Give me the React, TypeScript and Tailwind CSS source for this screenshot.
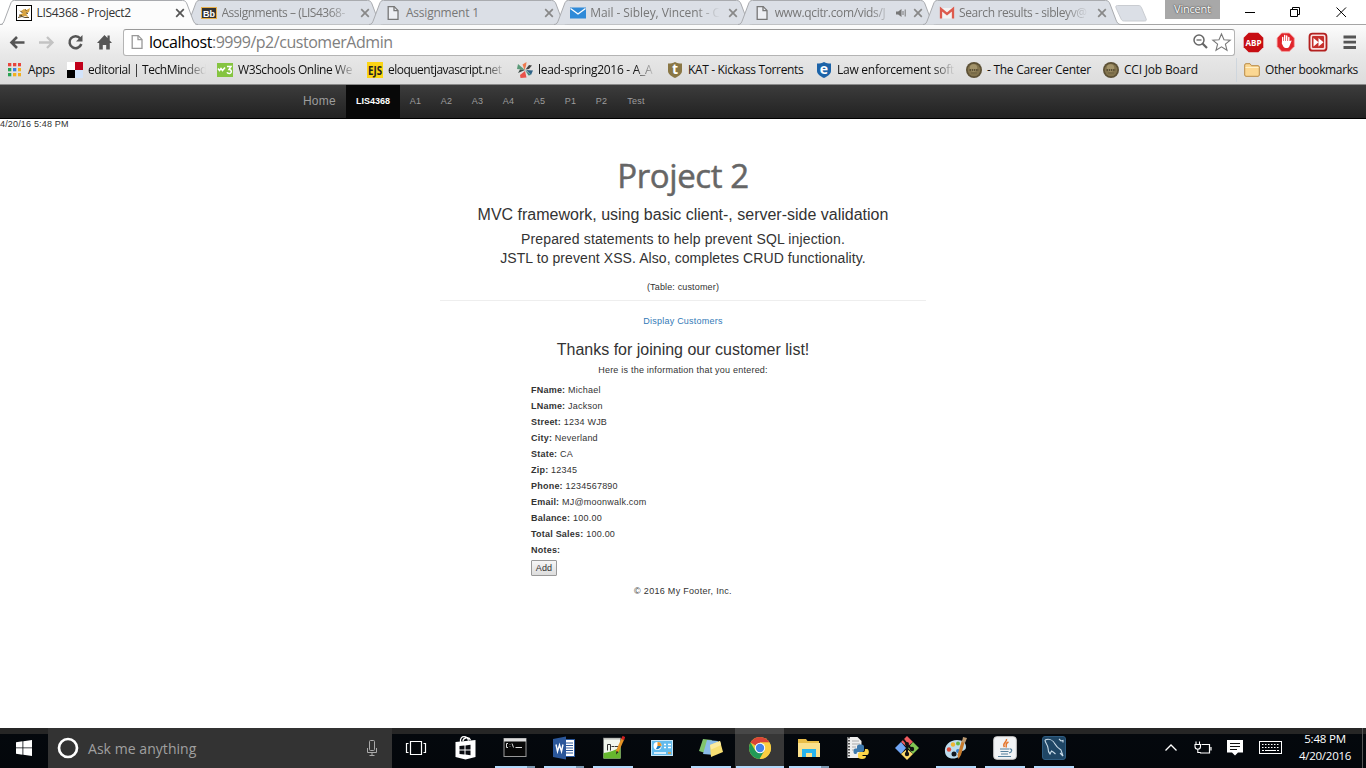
import React from "react";

const segoe = "font-['Open_Sans','Noto_Sans',sans-serif]";

/* ---------- small drawings ---------- */

const PageIcon = ({ tint = "#777" }: { tint?: string }) => (
  <svg width="16" height="16" viewBox="0 0 16 16" fill="#fff" fillOpacity=".5" stroke={tint} strokeWidth="1.3">
    <path d="M3.2 1.6h6l3.8 3.8v9H3.2z" />
    <path d="M9 1.6v4h4" fill="none" />
  </svg>
);

const CatIcon = () => (
  <svg width="16" height="16" viewBox="0 0 16 16">
    <rect x=".5" y=".5" width="15" height="15" fill="#fff" stroke="#000" />
    <path d="M2 4.500l3 1.500 3-2 2.500 1L14 3l-1 4-3 1.500 2.500 3.500-4-1-5.500 1L4 9.500 7 8z" fill="#d9a441" />
    <path d="M2 12.500l4-1 3 1h4M3 10l3 .5M9 4.500l1.500 1M10 8l2 .5M4.500 6.500l2 1" stroke="#5b4a2a" fill="none" />
  </svg>
);

const BbIcon = () => (
  <svg width="16" height="16" viewBox="0 0 16 16">
    <rect x=".5" y="2.500" width="15" height="11" fill="#333" stroke="#e8b04a" />
    <text x="8" y="11.500" textAnchor="middle" fontSize="9" fontWeight="700" fill="#fff" fontFamily="Liberation Sans">Bb</text>
  </svg>
);

const MailIcon = () => (
  <svg width="16" height="16" viewBox="0 0 16 16">
    <rect y="2.500" width="16" height="11" fill="#2f8ad8" />
    <path d="M.5 3.500L8 9l7.500-5.500" stroke="#fff" strokeWidth="1.300" fill="none" />
  </svg>
);

const GmailIcon = () => (
  <svg width="16" height="16" viewBox="0 0 16 16">
    <path d="M2 3h12v10.500H2z" fill="#f3f3f3" />
    <path d="M2 13.500V4l6 5 6-5v9.500" stroke="#dd5b4e" strokeWidth="2.300" fill="none" />
  </svg>
);

const CloseX = ({ tint = "#848484" }: { tint?: string }) => (
  <svg width="10" height="10" viewBox="0 0 10 10" stroke={tint} strokeWidth="1.700">
    <path d="M1.200 1.200l7.600 7.600M8.800 1.200L1.200 8.800" />
  </svg>
);

const Speaker = () => (
  <svg width="11" height="10" viewBox="0 0 11 10" fill="#777">
    <path d="M0 3.500h2.200L5.500 1v8L2.200 6.500H0z" />
    <path d="M7 3v4M9.200 1.500v7" stroke="#777" />
  </svg>
);

/* ---------- tab strip ---------- */

type TabProps = { icon: React.ReactNode; title: string; cls: string; active?: boolean; sound?: boolean };

const Tab = ({ icon, title, cls, active, sound }: TabProps) => (
  <div className={`relative h-[26px] shrink-0 ${active ? "z-10 w-[185px]" : "w-[184.400px]"}`}>
    <svg className="absolute top-0 left-0 overflow-visible" width="200" height="26" viewBox="0 0 200 26">
      <path
        d="M0 24.500C3 24.500 3.500 22.500 4.500 20L10.500 4C11.500 1.500 12 .5 14.500 .5H182.500C185 .5 186 1.500 187 4L193 20C194 22.500 195 24.500 198 24.500"
        fill={active ? "#fcfcfc" : "#dbdfe6"}
        stroke="#a9abaf"
      />
      {active && <path d="M0 25.500h198M3 24.500h192" stroke="#fcfcfc" />}
    </svg>
    <div className="relative flex h-full items-center pl-4">
      <span className="w-[20.500px] shrink-0">{icon}</span>
      <span
        className={`relative shrink-0 whitespace-nowrap text-[12px] leading-[18px] ${cls} ${sound ? "w-[117px]" : "w-[130px]"} ${active ? "text-[#333]" : "text-[#777]"} ${title.length > 18 ? "[mask-image:linear-gradient(to_right,#000_82%,transparent_100%)]" : ""}`}
      >
        {title}
      </span>
      {sound && <span className="ml-[4px] w-[12px]"><Speaker /></span>}
      <span className={`shrink-0 ${sound ? "ml-[5px]" : "ml-[8px]"}`}><CloseX tint={active ? "#555" : "#888"} /></span>
    </div>
  </div>
);

const TabStrip = () => (
  <div className="relative flex h-[25px] shrink-0 border-b border-[#a5a5a5] bg-white">
    <Tab active icon={<CatIcon />} title="LIS4368 - Project2" cls="tracking-[-0.300px]" />
    <Tab icon={<BbIcon />} title="Assignments – (LIS4368-" cls="tracking-[-0.480px]" />
    <Tab icon={<PageIcon />} title="Assignment 1" cls="tracking-[-0.200px]" />
    <Tab icon={<MailIcon />} title="Mail - Sibley, Vincent - C" cls="tracking-[-0.080px]" />
    <Tab icon={<PageIcon />} title="www.qcitr.com/vids/J" cls="tracking-[-0.350px]" sound />
    <Tab icon={<GmailIcon />} title="Search results - sibleyv@" cls="tracking-[-0.400px]" />
    <svg className="ml-[8.500px] mt-[5px] shrink-0" width="33" height="17" viewBox="0 0 33 17">
      <path d="M2.500 .5H23c2 0 2.800.5 3.500 2.200l4.600 11c.6 1.600 0 2.300-1.600 2.300H9.500c-2 0-2.800-.6-3.500-2.200L1 2.800C.5 1.200 1 .5 2.500 .5z" fill="#dbdfe6" stroke="#c9ccd1" />
    </svg>
    <div className={`ml-[16.500px] h-[19px] w-[55px] shrink-0 bg-[#a8a8a8] text-center text-[11px] leading-[18px] tracking-[-0.200px] text-white [text-shadow:0_0_2px_#444,0_0_1px_#444] ${segoe}`}>
      Vincent
    </div>
    <svg className="shrink-0" width="140" height="24" viewBox="0 0 140 24" fill="none" stroke="#000">
      <path d="M25 12.500h10" />
      <path d="M70.500 9.500h7v7h-7zM72.500 9.500v-2h7v7h-2" />
      <path d="M116.500 7.500l9.500 9.500M126 7.500l-9.500 9.500" />
    </svg>
  </div>
);

/* ---------- toolbar ---------- */

const Toolbar = () => (
  <div className="flex h-[31px] shrink-0 items-center pt-[3px]">
    <svg className="shrink-0" width="123" height="28" viewBox="0 0 123 28" fill="none">
      <path d="M11 14.500h13.500M17 9l-5.500 5.500L17 20" stroke="#555" strokeWidth="2.600" />
      <path d="M39 14.500h13.500M47 9l5.500 5.500L47 20" stroke="#c3c3c3" strokeWidth="2.300" />
      <path d="M80.300 10.500a6 6 0 1 0 1 5.500" stroke="#555" strokeWidth="2.500" />
      <path d="M82.500 7v6.500H76z" fill="#555" />
      <path d="M97 15l7.500-8 3 3V7.500h2.200v5l2.300 2.500h-2.200v6.500h-3.600v-4.500h-3.400v4.500h-3.600V15z" fill="#555" />
    </svg>
    <div className="flex h-[27px] w-[1112px] shrink-0 items-center rounded-[3px] border border-[#b4b4b4] border-t-[#999] bg-white pl-1">
      <span className="w-[21px] pl-px"><PageIcon tint="#999" /></span>
      <span className={`text-[16px] leading-[20px] text-[#808080] tracking-[-0.460px] ${segoe}`}>
        <span className="text-black">localhost</span>:9999/p2/customerAdmin
      </span>
      <svg className="ml-auto mr-[2px]" width="40" height="22" viewBox="0 0 40 22" fill="none" stroke="#666">
        <circle cx="7" cy="9" r="5" strokeWidth="1.500" />
        <path d="M4.500 9h5" strokeWidth="1.300" />
        <path d="M10.500 12.500l4.500 4.500" strokeWidth="2.200" />
        <path d="M29.500 3l2.500 5.800 6.200.4-4.800 4 1.600 6-5.500-3.400-5.500 3.400 1.600-6-4.800-4 6.200-.4z" stroke="#777" strokeWidth="1.100" />
      </svg>
    </div>
    <svg className="shrink-0" width="131" height="28" viewBox="0 0 131 28">
      <path d="M13.700 5h9.600l5 5v9.600l-5 5H13.700l-5-5V10z" transform="translate(0 -.3)" fill="#c70d12" />
      <text x="18.500" y="17.700" textAnchor="middle" fontSize="8.500" fontWeight="700" fill="#fff" fontFamily="Open Sans" textLength="16" lengthAdjust="spacingAndGlyphs">ABP</text>
      <g transform="translate(-.8 0)">
        <path d="M47.500 5h7.600l5 5v8.400l-5 5h-7.600l-4.600-5V10z" fill="#e0252b" stroke="#f7a5a5" strokeWidth=".8" />
        <path d="M48.500 14.500V9.500M50.500 14V7.500M52.500 14V8M54.600 15V9.500" stroke="#fff" strokeWidth="1.400" strokeLinecap="round" />
        <path d="M47.800 13h7.500l2.200-.5-2.400 6c-1 2-4.500 2-6 0l-1.500-3z" fill="#fff" />
      </g>
      <rect x="75" y="6" width="17" height="17" rx="3" fill="#f9dcdc" stroke="#b3201f" strokeWidth="1.800" transform="translate(-.5 -.3)" />
      <rect x="77" y="8" width="12" height="12" rx="1" fill="#c6302c" />
      <path d="M78.500 10l5 4.200-5 4.200zM83.500 10l5 4.200-5 4.200z" fill="#fff" />
      <path d="M108.500 9h12.500M108.500 14.200h12.500M108.500 19.500h12.500" stroke="#555" strokeWidth="2.800" />
    </svg>
  </div>
);

/* ---------- bookmarks ---------- */

const AppsIcon = () => (
  <svg width="14" height="14" viewBox="0 0 14 14">
    {["#e8453c", "#e8453c", "#e8453c", "#2aa353", "#3b7de0", "#f2b01e", "#2aa353", "#f2b01e", "#f2b01e"].map((c, i) => (
      <rect key={i} x={1 + (i % 3) * 5} y={Math.floor(i / 3) * 5} width="3.300" height="3.300" fill={c} />
    ))}
  </svg>
);
const Checker = () => (
  <svg width="16" height="16"><path d="M0 0h8v8H0z" fill="#fff" /><path d="M8 0h8v8H8z" fill="#c1001a" /><path d="M0 8h8v8H0z" fill="#000" /><path d="M8 8h8v8H8z" fill="#d3e4fb" /></svg>
);
const W3 = () => (
  <svg width="16" height="16" viewBox="0 0 16 16">
    <rect y="1" width="16" height="14" fill="#85c440" />
    <path d="M1 6.500l1.500 2 1.500-2 1.500 2L8 5.500M10 4.500h4L12 7.500c3 0 3 4 .3 4-1.300 0-2-.5-2.300-1.300" stroke="#fff" strokeWidth="1.500" fill="none" />
  </svg>
);
const Ejs = () => (
  <svg width="16" height="16"><rect width="16" height="16" fill="#fbd515" /><text x="8" y="13" textAnchor="middle" fontFamily="Open Sans" fontSize="13" fontWeight="700" textLength="14" lengthAdjust="spacingAndGlyphs" fill="#222">EJS</text></svg>
);
const Pinwheel = () => (
  <svg width="16" height="16" viewBox="0 0 16 16">
    <path d="M7.500 8L5.500 2.500 9.500 0l-.5 4z" fill="#ee7a50" />
    <path d="M8 8L0 7l1-5z" fill="#5a9a78" /><path d="M8 8L3 7.500 1 11z" fill="#3a4a44" />
    <path d="M8 9l1.500 6.500-6 .5L3 13z" fill="#e9524a" /><path d="M9 8l7 .5L14 13z" fill="#2f6387" /><path d="M8 8l6 5-2.500.5z" fill="#3d8c7c" /><path d="M8.500 7.500L12 3l3 .5-3 3.500z" fill="#444" />
  </svg>
);
const Shield = ({ fill, letter }: { fill: string; letter: string }) => (
  <svg width="16" height="16" viewBox="0 0 16 16">
    <path d="M1 1.500C4 1.500 6 1 8 0c2 1 4 1.500 7 1.500V9c0 3.500-4 5.500-7 7-3-1.500-7-3.500-7-7z" fill={fill} />
    <text x="8" y="12" textAnchor="middle" fontFamily="Open Sans" fontSize="14" fontWeight="700" fill="#fff">{letter}</text>
  </svg>
);
const Seal = () => (
  <svg width="16" height="16" viewBox="0 0 16 16">
    <circle cx="8" cy="8" r="8" fill="#5d5136" /><circle cx="8" cy="8" r="6.300" fill="#83744e" /><circle cx="7.500" cy="6" r="3.800" fill="#a3946b" />
    <path d="M3.500 8h9" stroke="#5d5136" strokeWidth="1.800" strokeDasharray="1.500 .7" /><path d="M5 11h6" stroke="#6d6040" />
  </svg>
);
const Folder = () => (
  <svg width="16" height="14" viewBox="0 0 16 14">
    <path d="M.7 12V2c0-.8.500-1.300 1.300-1.300h4l1.500 2h6.500c.8 0 1.300.5 1.300 1.300v8c0 .8-.5 1.300-1.300 1.300H2C1.200 13.300.7 12.800.7 12z" fill="#fbd792" stroke="#b98a45" />
    <path d="M1.500 4.500h13" stroke="#fff0c8" />
  </svg>
);

type BmProps = { icon: React.ReactNode; label: string; width: string; cls: string; fade?: boolean };
const Bookmark = ({ icon, label, width, cls, fade }: BmProps) => (
  <div className={`flex shrink-0 items-center ${width}`}>
    <span className="w-[21px] shrink-0">{icon}</span>
    <span className={`whitespace-nowrap leading-[18px] ${cls} ${fade ? "w-[118px] [mask-image:linear-gradient(to_right,#000_82%,transparent_100%)]" : ""}`}>{label}</span>
  </div>
);

const Bookmarks = () => (
  <div className={`flex h-[28px] shrink-0 items-center pl-[7px] text-[12px] text-[#111] ${segoe}`}>
    <Bookmark icon={<AppsIcon />} label="Apps" width="w-[60px]" cls="tracking-[-0.300px]" />
    <Bookmark icon={<Checker />} label="editorial | TechMinded" width="w-[150px]" cls="tracking-[-0.420px]" fade />
    <Bookmark icon={<W3 />} label="W3Schools Online We" width="w-[150px]" cls="tracking-[-0.400px]" fade />
    <Bookmark icon={<Ejs />} label="eloquentjavascript.net" width="w-[150px]" cls="tracking-[-0.520px]" fade />
    <Bookmark icon={<Pinwheel />} label="lead-spring2016 - A_A" width="w-[150px]" cls="tracking-[-0.300px]" fade />
    <Bookmark icon={<Shield fill="#8a7745" letter="t" />} label="KAT - Kickass Torrents" width="w-[149px]" cls="tracking-[-0.350px]" />
    <Bookmark icon={<Shield fill="#1c63a8" letter="e" />} label="Law enforcement soft" width="w-[150px]" cls="tracking-[-0.250px]" fade />
    <Bookmark icon={<Seal />} label="- The Career Center" width="w-[137px]" cls="tracking-[-0.270px]" />
    <Bookmark icon={<Seal />} label="CCI Job Board" width="w-[133px]" cls="tracking-[-0.200px]" />
    <div className="h-6 w-2 shrink-0 border-l border-[#cfd6dd]" />
    <Bookmark icon={<Folder />} label="Other bookmarks" width="w-[120px]" cls="tracking-[-0.370px]" />
  </div>
);

/* ---------- page ---------- */

const navItems = [
  { label: "A1", width: "w-[31px]" },
  { label: "A2", width: "w-[31px]" },
  { label: "A3", width: "w-[31px]" },
  { label: "A4", width: "w-[31px]" },
  { label: "A5", width: "w-[31px]" },
  { label: "P1", width: "w-[31px]" },
  { label: "P2", width: "w-[31px]" },
  { label: "Test", width: "w-[38px]" },
];

const NavBar = () => (
  <nav className="flex h-[35px] shrink-0 items-stretch border-b border-t border-b-black border-t-[#8a8a8a] bg-linear-to-b from-[#3c3c3c] to-[#222] pl-[303px] text-[9px] leading-[32px] text-[#9d9d9d]">
    <a className="w-[43px] text-[12px] tracking-[0.200px]">Home</a>
    <a className="w-[54px] bg-[#080808] text-center font-bold text-white">LIS4368</a>
    {navItems.map((n) => (
      <a key={n.label} className={`text-center tracking-[0.200px] ${n.width}`}>{n.label}</a>
    ))}
  </nav>
);

const fields: [string, string][] = [
  ["FName:", "Michael"],
  ["LName:", "Jackson"],
  ["Street:", "1234 WJB"],
  ["City:", "Neverland"],
  ["State:", "CA"],
  ["Zip:", "12345"],
  ["Phone:", "1234567890"],
  ["Email:", "MJ@moonwalk.com"],
  ["Balance:", "100.00"],
  ["Total Sales:", "100.00"],
  ["Notes:", ""],
];

const Content = () => (
  <main className="flex flex-1 flex-col bg-white text-[9px] leading-[13px] tracking-[0.220px] text-[#333]">
    <div className="h-[13px] leading-[11px] tracking-[0.170px]">4/20/16 5:48 PM</div>
    <div className="mx-auto flex w-[486px] flex-col text-center">
      <h1 className={`mt-[22px] text-[33px] leading-[44px] tracking-[-0.400px] text-[#666] [-webkit-text-stroke:0.500px_#666] ${segoe}`}>Project 2</h1>
      <h3 className="mt-[7px] text-[16px] leading-[20px] tracking-normal whitespace-nowrap">MVC framework, using basic client-, server-side validation</h3>
      <h4 className="mt-[5px] text-[14px] leading-[19px] tracking-[0.140px]">
        Prepared statements to help prevent SQL injection.<br />
        <span className="tracking-[0.080px]">JSTL to prevent XSS. Also, completes CRUD functionality.</span>
      </h4>
      <p className="mt-[13px] tracking-[0.150px]">(Table: customer)</p>
      <hr className="mt-[6px] border-[#eee]" />
      <a className="mt-[14px] text-[#337ab7]">Display Customers</a>
      <h3 className="mt-[12px] text-[16px] leading-[20px] tracking-normal">Thanks for joining our customer list!</h3>
      <p className="mt-[4px]">Here is the information that you entered:</p>
      <div className="mt-[5px] pl-[91px] text-left leading-[16px]">
        {fields.map(([k, v]) => (
          <div key={k}><b>{k}</b> {v}</div>
        ))}
        <button className="mt-[2px] flex h-[16px] w-[26px] items-center justify-center rounded-[1px] border border-[#999] bg-linear-to-b from-[#f6f6f6] to-[#ddd]">Add</button>
      </div>
      <p className="mt-[9px] tracking-[0.300px]">© 2016 My Footer, Inc.</p>
    </div>
  </main>
);

/* ---------- taskbar ---------- */

const I = ({ children }: { children: React.ReactNode }) => (
  <svg width="24" height="24" viewBox="0 0 24 24">{children}</svg>
);

const TaskViewIcon = () => (
  <I><path d="M5.500 5.500h11v13h-11zM3.500 7.500h-2v9h2M18.500 7.500h2v9h-2" fill="none" stroke="#fff" strokeWidth="1.200" /></I>
);
const StoreIcon = () => (
  <I>
    <path d="M1.500 6l20-2v17l-10 2.500-10-2.500z" fill="#fff" />
    <path d="M6.500 6C6 2 8 .7 10 .7s4 1.300 4.500 4M9 5c0-3 6-5 7.500-.8" fill="none" stroke="#fff" strokeWidth="1.300" />
    <path d="M5.500 10l5-.5v4h-5zM11.500 9.400l5-.6v4.700h-5zM5.500 14.500h5v4l-5-.5zM11.500 14.500h5v4.700l-5-.6z" fill="#090b10" />
  </I>
);
const CmdIcon = () => (
  <I>
    <rect x="1" y="2.500" width="22" height="18" fill="#080808" stroke="#999" />
    <path d="M1 4h22" stroke="#ddd" strokeWidth="3" />
    <path d="M3.500 7.500h1.500M3.500 7.500v4M3.500 11.500h1.500M7 8.500v.5M7 10.500v.5M9 7.500l1.500 4M12.500 11.500H19" stroke="#ddd" fill="none" />
  </I>
);
const WordIcon = () => (
  <I>
    <rect x="11" y="3.500" width="11.500" height="17" fill="#fff" stroke="#2b579a" />
    <path d="M14 7h7M14 9.500h7M14 12h7M14 14.500h7M14 17h7" stroke="#2b579a" />
    <path d="M1 3l13-2.500v23L1 21z" fill="#2b579a" />
    <path d="M4 8.500l1.500 7 2-6.500 2 6.500 1.500-7" stroke="#fff" strokeWidth="1.400" fill="none" />
  </I>
);
const NotepadPP = () => (
  <I>
    <path d="M2.500 2h17v20.500h-17z" fill="#f2f6ee" />
    <path d="M2.500 17q9-1 17-6v11.500h-17z" fill="#66b82e" />
    <path d="M2.500 2.500h17" stroke="#888" strokeDasharray="1 1" strokeWidth="2" />
    <path d="M6.500 14.500v-6h3v6M10.500 10.500h3M14 10.500h3" stroke="#333" fill="none" />
    <path d="M22 2.500L16 16" stroke="#e59325" strokeWidth="3" /><path d="M21.500 3.500L23 .5" stroke="#c22" strokeWidth="3" /><path d="M15.500 15l-.5 3.500 2.500-2.500z" fill="#222" />
  </I>
);
const ControlPanel = () => (
  <I>
    <rect x="1.500" y="4.500" width="21" height="15" fill="#63bbed" stroke="#c8e5f5" />
    <circle cx="7.500" cy="10" r="4" fill="#fff" /><path d="M7.500 10V6a4 4 0 0 1 4 4z" fill="#ee982c" /><path d="M7.500 10h3.500a4 4 0 0 1-5 3z" fill="#187bc0" />
    <path d="M14 8.500h2M18 8.500h3M14 11.500h2M18 11.500h3M4 17h12" stroke="#fff" strokeWidth="1.300" /><path d="M18 17h3" stroke="#ee982c" strokeWidth="1.500" />
  </I>
);
const StickyIcon = () => (
  <I>
    <path d="M4 3l9 1-4 14-9-3z" fill="#81c46c" /><path d="M8 4l11 1-3 14-12-1z" fill="#8abbe9" /><path d="M11 9l10-4 3 11-12 5z" fill="#f8df72" /><path d="M11 9l10-4 1.200 4-10 4.500z" fill="#fbeaa0" />
  </I>
);
const ChromeIcon = () => (
  <I>
    <circle cx="12" cy="12" r="11" fill="#e4cb38" />
    <path d="M12 12L2.500 6.500A11 11 0 0 1 21.500 6.500H12z" fill="#da4437" />
    <path d="M12 12L11.500 23A11 11 0 0 0 21.500 6.500H12z" fill="#fbce42" />
    <path d="M2.500 6.500L7.200 14.500 16.500 14.500 11.500 23A11 11 0 0 1 2.500 6.500z" fill="#229a56" />
    <circle cx="12" cy="12" r="5.200" fill="#fff" /><circle cx="12" cy="12" r="4.200" fill="#4382ea" />
  </I>
);
const Explorer = () => (
  <I>
    <path d="M1 3h8l1.500 2H22v16H1z" fill="#e9bd48" /><path d="M1 7h22v14H1z" fill="#fbe08c" />
    <path d="M5 21v-8h14v8h-4v-4H9v4z" fill="#27b4ec" />
  </I>
);
const PyPath = () => (
  <g>
    <path d="M11 13V10.500c0-1.500 1.500-2 3.500-2s3.500.5 3.500 2V14c0 1-1 2-2 2h-4c-1 0-1.500 1-1.500 2H9c-2 0-2-5 0-5.500h6" fill="#3d79ad" />
    <path d="M19 13h2c2.500 0 2.500 6 0 6h-4.500v1H20c0 2-1 3-4 3s-4-1-4-2.500V18c0-1 1-2 2-2h3.500c1 0 1.500-1 1.500-3z" fill="#fcd548" />
  </g>
);
const PythonIcon = () => (
  <I><path d="M1.500 1h10l4 4v17h-14z" fill="#eee" /><path d="M3 1v21" stroke="#555" strokeWidth="2" strokeDasharray="1.500 1.500" /><path d="M6 5h7M6 8h8M6 11h4M6 14h3" stroke="#aaa" /><PyPath /></I>
);
const GitIcon = () => (
  <I>
    <path d="M12 0l6 6-6 5-6-5z" fill="#ee5b5f" /><path d="M0 12l6-6 5 6-5 6z" fill="#70a5f4" /><path d="M24 12l-6-6-5 6 5 6z" fill="#82c653" /><path d="M12 24l6-6-6-5-6 5z" fill="#fad96a" />
    <path d="M8 3l4 5v10M12 9l5 4" stroke="#111" strokeWidth="2" fill="none" /><circle cx="12" cy="8" r="2" fill="#111" /><circle cx="12" cy="18" r="2.200" fill="#111" /><circle cx="17" cy="13" r="2.200" fill="#111" />
  </I>
);
const PaintIcon = () => (
  <I>
    <path d="M1 16C0 9 6 4 13 4c6 0 9 3 9 7s-4 3-5 6-3 5.500-8 5.500S1.500 20 1 16z" fill="#bcdcee" />
    <circle cx="5" cy="13.500" r="2.200" fill="#e04b38" /><circle cx="9" cy="8.500" r="2.200" fill="#eeb533" /><circle cx="14" cy="7.500" r="2" fill="#66b645" /><circle cx="10" cy="18" r="2.500" fill="#101820" /><circle cx="14" cy="15" r="2" fill="#3c86cc" />
    <path d="M21 5l-4 14-2.500 4-1-4L18 4z" fill="#c67a2c" /><path d="M19 1l4 1-2 5-3-1z" fill="#bb9a72" />
  </I>
);
const JavaIcon = () => (
  <I>
    <rect x=".7" y=".7" width="22.600" height="22.600" rx="3" fill="#f1f3f5" stroke="#ccc" />
    <path d="M13.500 3c1 3-5 4-2 8M15.500 6c-4 1.500-1.500 3-2.500 5.500" stroke="#e5752c" strokeWidth="1.500" fill="none" />
    <path d="M7 13h9M7.500 15.500h8M8 18h7M5 20.500h13M16.500 13c3-.5 3 3-.5 4" stroke="#54809d" strokeWidth="1.200" fill="none" />
  </I>
);
const MysqlIcon = () => (
  <I>
    <rect x=".5" y=".5" width="23" height="23" rx="2.500" fill="#1f4665" stroke="#2f5c80" />
    <path d="M3 4c4-1.500 8 0 10 4 1.500 3 3 4 6 6l2 6-3-3M3 4c0 3 3 5 3 8s0 4 2 6l1.500-3c2 1 3 2 4 3M17 3l2 2 2-.5v2" stroke="#c9dbe8" strokeWidth="1.100" fill="none" />
  </I>
);

const apps: { icon: React.ReactNode; state: "none" | "open" | "multi" | "active" }[] = [
  { icon: <TaskViewIcon />, state: "none" },
  { icon: <StoreIcon />, state: "none" },
  { icon: <CmdIcon />, state: "multi" },
  { icon: <WordIcon />, state: "multi" },
  { icon: <NotepadPP />, state: "open" },
  { icon: <ControlPanel />, state: "none" },
  { icon: <StickyIcon />, state: "open" },
  { icon: <ChromeIcon />, state: "active" },
  { icon: <Explorer />, state: "multi" },
  { icon: <PythonIcon />, state: "none" },
  { icon: <GitIcon />, state: "none" },
  { icon: <PaintIcon />, state: "open" },
  { icon: <JavaIcon />, state: "open" },
  { icon: <MysqlIcon />, state: "open" },
];

const bars = {
  none: "bg-transparent w-10",
  open: "bg-[#b2d9fb] w-10",
  multi: "bg-[#b2d9fb] w-10 border-r-[8px] border-[#7c99b2]",
  active: "bg-[#b2d9fb] w-12",
};

const Taskbar = () => (
  <footer className={`flex h-10 shrink-0 bg-[linear-gradient(to_bottom,#262626_0,#262626_6px,#04080d_6px,#04070b_100%)] text-white ${segoe}`}>
    <div className="flex w-12 items-center justify-center">
      <svg width="16" height="16" viewBox="0 0 16 16" fill="#fff"><path d="M0 2.200L6.500 1.300v6.200H0zM7.300 1.200L16 0v7.500H7.300zM0 8.300h6.500v6.400L0 13.800zM7.300 8.300H16V16l-8.700-1.200z" /></svg>
    </div>
    <div className="flex w-[344px] items-center bg-[#333] pl-[9px] pr-[13px]">
      <svg width="22" height="22" viewBox="0 0 22 22"><circle cx="11" cy="11" r="9" fill="none" stroke="#fff" strokeWidth="2.700" /></svg>
      <span className="ml-[9px] pt-[2px] text-[14px] leading-5 tracking-[0.050px] text-[#a0a0a0]">Ask me anything</span>
      <svg className="ml-auto" width="14" height="18" viewBox="0 0 14 18" fill="none" stroke="#aaa"><rect x="4.500" y="1.500" width="5" height="10" rx="1" /><path d="M2.500 9v4.500h9V9M7 13.500v3M4.500 16.500h5" /></svg>
    </div>
    <div className="flex">
      {apps.map((a, i) => (
        <div key={i} className={`flex w-[49px] flex-col items-center ${a.state === "active" ? "bg-[linear-gradient(to_bottom,#484848_0,#484848_6px,#373737_6px)]" : ""}`}>
          <div className="flex h-[38px] items-center pt-[2px]">{a.icon}</div>
          <div className={`h-[2px] ${bars[a.state]}`} />
        </div>
      ))}
    </div>
    <svg className="ml-auto shrink-0" width="130" height="40" viewBox="0 0 130 40" fill="none" stroke="#fff">
      <path d="M7.500 22.500L13 17l5.500 5.500" strokeWidth="1.300" />
      <path d="M43.500 16.500H51.500v8.500H42M53 19v3.500" strokeWidth="1.200" />
      <path d="M38 13.500v3M41.500 13.500v3M37 16.500h5.500v2c0 2-1 2.700-2.700 2.700S37 20.500 37 18.500zM39.800 21v3.500h3" strokeWidth="1.100" />
      <path d="M69 12h16v12.500h-5l-3 3-3-3h-5z" fill="#fff" stroke="none" />
      <path d="M72 15.500h10M72 18.500h10M72 21.500h7" stroke="#111" />
      <rect x="101.500" y="13.500" width="22" height="12" />
      <path d="M104 16.500h17M104 19.500h17" strokeDasharray="1.500 1.500" /><path d="M104 22.500h2M107 22.500h11M119 22.500h2" />
    </svg>
    <div className="w-[74px] shrink-0 pt-[2px] text-center text-[11.500px] leading-[17px]">
      <div className="tracking-[-0.200px]">5:48 PM</div>
      <div className="tracking-[-0.250px]">4/20/2016</div>
    </div>
    <div className="w-[4px] shrink-0 border-l border-[#555]" />
  </footer>
);

export default function App() {
  return (
    <div className="flex h-[768px] w-[1366px] flex-col overflow-hidden bg-white font-['Liberation_Sans',Arial,sans-serif]">
      <header className={`shrink-0 ${segoe}`}>
        <TabStrip />
        <div className="bg-linear-to-b from-[#fcfcfc] via-[#e8e8e8] to-[#dcdcdc]">
          <Toolbar />
          <Bookmarks />
        </div>
      </header>
      <NavBar />
      <Content />
      <Taskbar />
    </div>
  );
}
